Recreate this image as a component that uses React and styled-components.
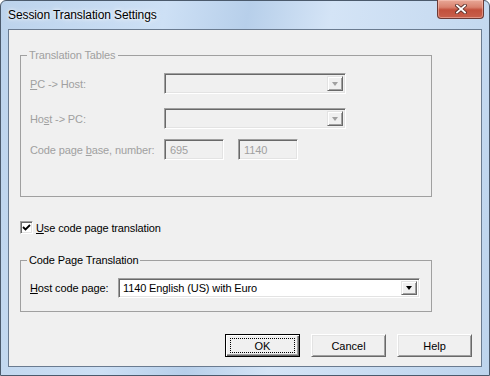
import React from 'react';
import styled, { createGlobalStyle } from 'styled-components';

const GlobalStyle = createGlobalStyle`
  body {
    margin: 0;
    background: #ffffff;
    font-family: "Liberation Sans", Arial, sans-serif;
  }
`;

// Window frame (Windows 7 basic look)
const Window = styled.div`
  width: 490px;
  height: 376px;
  box-sizing: border-box;
  border: 1px solid #4b5a6c;
  border-radius: 6px 6px 0 0;
  background: linear-gradient(100deg, #bcd3ec 0%, #cde0f5 30%, #b7cfea 45%, #d4e4f6 60%, #bdd4ed 100%);
  display: flex;
  flex-direction: column;
`;

const TitleBar = styled.div`
  height: 28px;
  flex-shrink: 0;
  display: flex;
  align-items: flex-start;
  justify-content: space-between;
  padding: 0 5px 0 7px;
`;

const Title = styled.span`
  align-self: center;
  font-size: 12px;
  letter-spacing: -0.1px;
  color: #000;
  text-shadow: 0 0 6px rgba(255, 255, 255, 0.95), 0 0 3px rgba(255, 255, 255, 0.9);
`;

const CloseButton = styled.div`
  width: 47px;
  height: 19px;
  margin-top: -1px;
  box-sizing: border-box;
  border: 1px solid #6b3a36;
  border-top: none;
  border-radius: 0 0 4px 4px;
  background: linear-gradient(180deg, #e8a897 0%, #d9826f 40%, #c2503c 55%, #c8604c 100%);
  box-shadow: inset 0 0 0 1px rgba(255, 210, 200, 0.45);
  display: flex;
  align-items: center;
  justify-content: center;
`;

const Client = styled.div`
  flex: 1;
  margin: 0 7px 8px 7px;
  background: #f0f0f0;
  border: 1px solid #6a7b90;
  display: flex;
  flex-direction: column;
  padding: 19px 9px 0 11px;
  font-size: 11px;
  letter-spacing: -0.12px;
  color: #000;
`;

// Group box
const GroupBox = styled.fieldset`
  margin: ${p => p.$top || 0}px 0 0 0;
  padding: 0;
  min-width: 0;
  width: 412px;
  height: ${p => p.$h}px;
  box-sizing: border-box;
  border: 1px solid #a0a0a0;
  flex-shrink: 0;
`;

const Legend = styled.legend`
  margin-left: 6px;
  padding: 0 2px;
  line-height: 13px;
  font-size: 11px;
  color: ${p => (p.$disabled ? '#a0a0a0' : '#000')};
`;

const GroupBody = styled.div`
  display: flex;
  flex-direction: column;
  padding: 11px 0 0 9px;
`;

const Row = styled.div`
  display: flex;
  align-items: center;
  margin-top: ${p => p.$top || 0}px;
`;

const Label = styled.span`
  width: ${p => p.$w}px;
  flex-shrink: 0;
  color: ${p => (p.$disabled ? '#a0a0a0' : '#000')};
  white-space: nowrap;
`;

const sunken = `
  box-sizing: border-box;
  border: 1px solid;
  border-color: #a0a0a0 #ffffff #ffffff #a0a0a0;
  box-shadow: inset 1px 1px 0 #696969, inset -1px -1px 0 #e3e3e3;
`;

const Combo = styled.div`
  ${sunken}
  width: ${p => p.$w}px;
  height: ${p => p.$h || 21}px;
  background: ${p => (p.$disabled ? '#f0f0f0' : '#ffffff')};
  display: flex;
  align-items: center;
  padding: 2px;
  color: ${p => (p.$disabled ? '#a0a0a0' : '#000')};
`;

const ComboText = styled.span`
  flex: 1;
  padding-left: 2px;
  white-space: nowrap;
  overflow: hidden;
`;

const DropButton = styled.div`
  width: 16px;
  height: 100%;
  box-sizing: border-box;
  background: #f0f0f0;
  border: 1px solid;
  border-color: #e3e3e3 #696969 #696969 #e3e3e3;
  box-shadow: inset 1px 1px 0 #ffffff, inset -1px -1px 0 #a0a0a0;
  display: flex;
  align-items: center;
  justify-content: center;
`;

const Arrow = styled.div`
  width: 0;
  height: 0;
  border-left: 3.5px solid transparent;
  border-right: 3.5px solid transparent;
  border-top: 4px solid ${p => (p.$disabled ? '#a0a0a0' : '#000')};
`;

const TextBox = styled.div`
  ${sunken}
  width: 60px;
  height: 21px;
  margin-left: ${p => p.$left || 0}px;
  background: #f0f0f0;
  color: #a0a0a0;
  display: flex;
  align-items: center;
  padding-left: 5px;
`;

const CheckRow = styled.label`
  display: flex;
  align-items: center;
  gap: 3px;
  margin-top: 24px;
  height: 13px;
`;

const CheckBox = styled.span`
  ${sunken}
  width: 13px;
  height: 13px;
  background: #ffffff;
  display: flex;
  align-items: center;
  justify-content: center;
`;

const ButtonRow = styled.div`
  display: flex;
  justify-content: flex-end;
  gap: 11px;
  margin-top: 22px;
`;

const Button = styled.button`
  width: 75px;
  height: 23px;
  box-sizing: border-box;
  padding: 0;
  font-family: "Liberation Sans", Arial, sans-serif;
  font-size: 11px;
  color: #000;
  background: #f0f0f0;
  border: 1px solid;
  border-color: ${p => (p.$default ? '#000' : '#ffffff #696969 #696969 #ffffff')};
  box-shadow: ${p =>
    p.$default
      ? 'inset 1px 1px 0 #ffffff, inset -1px -1px 0 #696969, inset -2px -2px 0 #a0a0a0'
      : 'inset 1px 1px 0 #e3e3e3, inset -1px -1px 0 #a0a0a0'};
  display: flex;
  align-items: center;
  justify-content: center;
`;

const FocusRect = styled.span`
  width: 63px;
  height: 13px;
  border: 1px dotted #000;
  display: flex;
  align-items: center;
  justify-content: center;
`;

const U = styled.span`
  text-decoration: underline;
`;

const App = () => (
  <>
    <GlobalStyle />
    <Window>
      <TitleBar>
        <Title>Session Translation Settings</Title>
        <CloseButton>
          <svg width="12" height="10" viewBox="0 0 12 10">
            <path d="M2 1.5 L10 8.5 M10 1.5 L2 8.5" stroke="#5a302b" strokeWidth="3.6" strokeLinecap="square" />
            <path d="M2 1.5 L10 8.5 M10 1.5 L2 8.5" stroke="#ffffff" strokeWidth="1.8" strokeLinecap="square" />
          </svg>
        </CloseButton>
      </TitleBar>
      <Client>
        <GroupBox $h={148}>
          <Legend $disabled>Translation Tables</Legend>
          <GroupBody>
            <Row>
              <Label $w={134} $disabled><U>P</U>C -&gt; Host:</Label>
              <Combo $w={182} $disabled>
                <ComboText />
                <DropButton><Arrow $disabled /></DropButton>
              </Combo>
            </Row>
            <Row $top={14}>
              <Label $w={134} $disabled>Ho<U>s</U>t -&gt; PC:</Label>
              <Combo $w={182} $disabled>
                <ComboText />
                <DropButton><Arrow $disabled /></DropButton>
              </Combo>
            </Row>
            <Row $top={10}>
              <Label $w={134} $disabled>Code page <U>b</U>ase, number:</Label>
              <TextBox>695</TextBox>
              <TextBox $left={14}>1140</TextBox>
            </Row>
          </GroupBody>
        </GroupBox>

        <CheckRow>
          <CheckBox>
            <svg width="9" height="9" viewBox="0 0 9 9">
              <path d="M1 4 L3.5 6.5 L8 2" stroke="#000" strokeWidth="1.8" fill="none" />
            </svg>
          </CheckBox>
          <span><U>U</U>se code page translation</span>
        </CheckRow>

        <GroupBox $h={58} $top={20}>
          <Legend>Code Page Translation</Legend>
          <GroupBody>
            <Row>
              <Label $w={88}><U>H</U>ost code page:</Label>
              <Combo $w={302} $h={20}>
                <ComboText>1140 English (US) with Euro</ComboText>
                <DropButton><Arrow /></DropButton>
              </Combo>
            </Row>
          </GroupBody>
        </GroupBox>

        <ButtonRow>
          <Button $default><FocusRect>OK</FocusRect></Button>
          <Button>Cancel</Button>
          <Button>Help</Button>
        </ButtonRow>
      </Client>
    </Window>
  </>
);

export default App;
